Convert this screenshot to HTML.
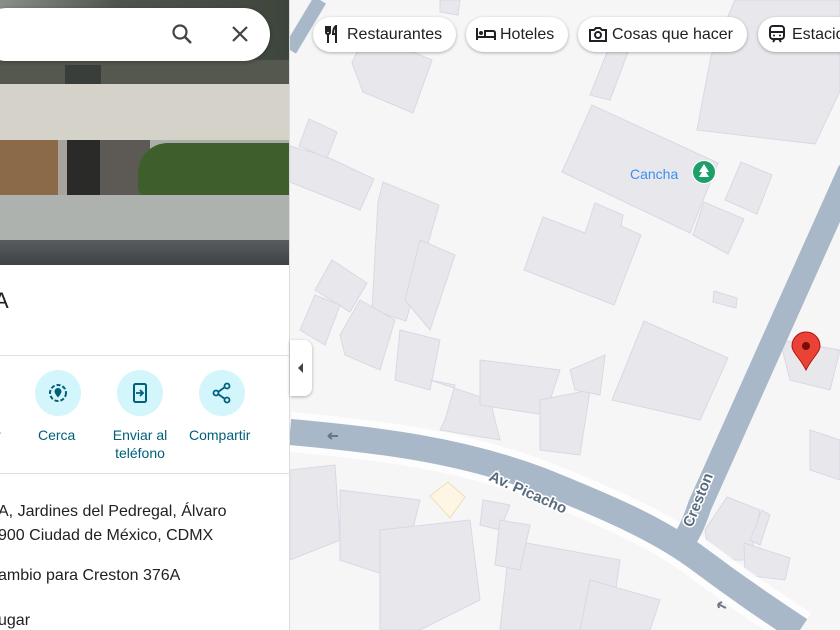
<!DOCTYPE html><html><head><style>
body{margin:0;width:840px;height:630px;overflow:hidden;position:relative;font-family:"Liberation Sans",sans-serif;background:#f6f6f6}
.panel{position:absolute;left:0;top:0;width:289px;height:630px;background:#fff;border-right:1px solid #ddd;z-index:2}
.photo{position:absolute;left:0;top:0;width:289px;height:265px;overflow:hidden;background:#a9aeab}
.photo div{position:absolute}
.search{position:absolute;left:-20px;top:8px;width:290px;height:53px;background:#fff;border-radius:27px;box-shadow:0 1px 4px rgba(0,0,0,.3);z-index:3}
.t{position:absolute;color:#202124;font-size:16px}
.btn{position:absolute;top:370px;width:46px;height:46px;border-radius:50%;background:#d3f5fc}
.lbl{position:absolute;top:426px;color:#00607a;font-size:14px;text-align:center;line-height:18px}
.chip{position:absolute;top:17px;height:35px;background:#fff;border-radius:18px;box-shadow:0 1px 3px rgba(0,0,0,.3);font-size:16px;color:#202124;line-height:35px;padding:0 14px 0 34px;z-index:3;white-space:nowrap}
.chip svg{position:absolute;left:10px;top:8px}
</style></head><body>
<svg style="position:absolute;left:0;top:0" width="840" height="630">
<path d="M320,0 L290,50" stroke="#a8b8c8" stroke-width="14"/>
<g fill="#e8e8ec" stroke="#d8d8e6">
<polygon points="352,63 366,32 432,60 413,113 363,92"/><polygon points="440,0 460,0 458,15 440,12"/>
<polygon points="562,172 592,105 718,163 690,233"/><polygon points="725,200 741,162 772,175 757,214"/>
<polygon points="693,235 704,202 744,219 728,254"/>
<polygon points="524,270 543,217 585,233 595,203 623,215 621,226 641,235 614,305"/>
<polygon points="697,130 711,56 735,0 840,0 840,91 815,144"/><polygon points="590,95 620,20 640,20 610,100"/>
<polygon points="714,291 737,298 736,308 713,302"/>
<polygon points="612,400 644,321 728,358 700,420"/>
<polygon points="290,146 325,156 374,179 360,210 290,182"/><polygon points="299,146 309,119 337,132 327,158"/>
<polygon points="378,202 383,182 439,205 406,321 372,310"/><polygon points="405,300 420,240 455,255 430,330"/>
<polygon points="315,290 332,260 367,283 350,312"/><polygon points="300,330 315,295 340,305 325,345"/>
<polygon points="340,335 360,300 395,320 380,370 345,355"/><polygon points="400,330 440,340 430,390 395,380"/>
<polygon points="430,380 455,385 445,420 440,430 500,440 490,400"/><polygon points="480,360 560,370 545,415 480,405"/>
<polygon points="540,400 590,390 580,455 540,450"/><polygon points="570,370 605,355 600,395 575,390"/>
<polygon points="780,340 840,350 830,390 790,380"/><polygon points="810,430 840,440 840,480 810,470"/>
<polygon points="705,530 727,497 760,510 750,560 710,560"/><polygon points="744,543 790,558 785,580 745,575"/><polygon points="762,510 770,515 760,545 750,540"/>
<polygon points="290,470 335,465 340,540 290,560"/><polygon points="340,490 420,500 400,580 340,560"/>
<polygon points="380,530 470,520 480,600 420,630 380,630"/><polygon points="483,500 510,505 500,530 480,525"/>
<polygon points="510,540 620,560 610,630 500,630"/><polygon points="590,580 660,600 650,630 580,630"/>
<polygon points="500,520 530,525 520,570 495,565"/>
</g>
<polygon points="430,496 448,482 465,497 450,518" fill="#fdf6e5" stroke="#f0dfb6"/>
<path d="M290,432 C380,440 460,450 540,480 C610,508 660,530 700,560 C740,590 770,610 800,630" stroke="#fff" stroke-width="40" fill="none" opacity=".8"/>
<path d="M290,432 C380,440 460,450 540,480 C610,508 660,530 700,560 C740,590 770,610 800,630" stroke="#a8b8c8" stroke-width="26" fill="none"/>
<path d="M850,170 L700,505 Q690,535 680,545" stroke="#a8b8c8" stroke-width="24" fill="none"/>
<path d="M328,436 h10 M328,436 l4,-3 M328,436 l4,3" stroke="#6b7785" stroke-width="2" fill="none"/>
<path d="M718,604 l8,4 M718,604 l4,-2 M718,604 l1,4" stroke="#6b7785" stroke-width="2" fill="none"/>
<text x="488" y="480" font-size="15" font-weight="bold" fill="#5b6b7d" stroke="#fff" stroke-width="3" paint-order="stroke" transform="rotate(24 488 480)" font-family="Liberation Sans">Av. Picacho</text>
<text x="692" y="528" font-size="15" font-weight="bold" fill="#5b6b7d" stroke="#fff" stroke-width="3" paint-order="stroke" transform="rotate(-68 692 528)" font-family="Liberation Sans">Creston</text>
<text x="630" y="179" font-size="14" fill="#3b8ef0" font-family="Liberation Sans">Cancha</text>
<circle cx="704" cy="172" r="12" fill="#fff"/><circle cx="704" cy="172" r="11" fill="#1e9e68"/><path d="M704,164 l-5,8 h3 l-3,5 h10 l-3,-5 h3z" fill="#fff"/>
<path d="M806,370 C800,358 792,352 792,346 a14,14 0 0 1 28,0 c0,6 -8,12 -14,24z" fill="#ea4335" stroke="#b31412"/><circle cx="806" cy="346" r="4" fill="#7a0c0c"/>
</svg>
<div style="position:absolute;left:290px;top:340px;width:22px;height:56px;background:#fff;border-radius:0 8px 8px 0;box-shadow:0 1px 3px rgba(0,0,0,.3);z-index:3"><div style="position:absolute;left:8px;top:23px;border-right:5px solid #444;border-top:5px solid transparent;border-bottom:5px solid transparent"></div></div>
<div class="chip" style="left:313px">Restaurantes<svg width="18" height="18"><path d="M3,1 v6 q0,2 2,2 v9 M7,1 v6 q0,2 -2,2 M5,1 v6 M13,18 V1 q-3,2 -3,8 h3" stroke="#202124" stroke-width="2" fill="none"/></svg></div>
<div class="chip" style="left:466px">Hoteles<svg width="20" height="18"><path d="M1,3 v12 M1,12 h18 v3 M19,12 v-4 q0,-2 -2,-2 h-8 v6" stroke="#202124" stroke-width="2" fill="none"/><circle cx="5" cy="8" r="2" fill="#202124"/></svg></div>
<div class="chip" style="left:578px">Cosas que hacer<svg width="20" height="18"><path d="M2,5 h4 l2,-2 h4 l2,2 h4 v11 h-16z" stroke="#202124" stroke-width="2" fill="none"/><circle cx="10" cy="10" r="3" stroke="#202124" stroke-width="2" fill="none"/></svg></div>
<div class="chip" style="left:758px">Estaciones<svg width="18" height="18"><rect x="2" y="1" width="14" height="13" rx="3" stroke="#202124" stroke-width="2" fill="none"/><path d="M3,7 h12 M5,17 l2,-3 M13,17 l-2,-3" stroke="#202124" stroke-width="2"/><circle cx="6" cy="10.5" r="1" fill="#202124"/><circle cx="12" cy="10.5" r="1" fill="#202124"/></svg></div>
<div class="panel"><div class="photo">
<div style="left:0;top:0;width:289px;height:88px;background:linear-gradient(90deg,#8a8f8a,#4f554e 40%,#3e463c)"></div>
<div style="left:0;top:60px;width:289px;height:28px;background:#55584f"></div>
<div style="left:65px;top:65px;width:36px;height:25px;background:#3a3e3a"></div>
<div style="left:0;top:84px;width:289px;height:56px;background:#d5d2ca"></div>
<div style="left:0;top:140px;width:58px;height:55px;background:#8a6a48"></div>
<div style="left:58px;top:140px;width:10px;height:55px;background:#a8a39c"></div>
<div style="left:67px;top:140px;width:33px;height:55px;background:#2a2a28"></div>
<div style="left:100px;top:140px;width:50px;height:58px;background:#5d5a55"></div>
<div style="left:138px;top:143px;width:151px;height:62px;background:#3e5e2c;border-radius:30px 0 0 20px"></div>
<div style="left:0;top:195px;width:289px;height:52px;background:#aeb2ae"></div>
<div style="left:0;top:240px;width:289px;height:25px;background:linear-gradient(#5a5d60,#3f4245)"></div>
</div>
<div class="t" style="left:-6px;top:288px;font-size:22px">A</div>
<div style="position:absolute;left:0;top:355px;width:289px;height:1px;background:#e0e0e0"></div>
<div class="btn" style="left:35px"><svg width="46" height="46"><circle cx="23" cy="23" r="8" fill="none" stroke="#00607a" stroke-width="2" stroke-dasharray="4 2"/><path d="M23,18 a3.5,3.5 0 0 1 3.5,3.5 c0,2 -3.5,6 -3.5,6 c0,0 -3.5,-4 -3.5,-6 a3.5,3.5 0 0 1 3.5,-3.5z" fill="#00607a"/></svg></div>
<div class="btn" style="left:117px"><svg width="46" height="46"><rect x="17" y="14" width="12" height="18" rx="1.5" fill="none" stroke="#00607a" stroke-width="2"/><path d="M19,23 h6 M23,20 l3,3 -3,3" stroke="#00607a" stroke-width="1.8" fill="none"/></svg></div>
<div class="btn" style="left:199px"><svg width="46" height="46"><circle cx="28" cy="16" r="2.5" fill="none" stroke="#00607a" stroke-width="1.8"/><circle cx="17" cy="23" r="2.5" fill="none" stroke="#00607a" stroke-width="1.8"/><circle cx="28" cy="30" r="2.5" fill="none" stroke="#00607a" stroke-width="1.8"/><path d="M19,22 L26,17 M19,24 L26,29" stroke="#00607a" stroke-width="1.8"/></svg></div>
<div class="lbl" style="left:-4px">r</div>
<div class="lbl" style="left:38px">Cerca</div>
<div class="lbl" style="left:108px;width:64px">Enviar al teléfono</div>
<div class="lbl" style="left:189px">Compartir</div>
<div style="position:absolute;left:0;top:473px;width:289px;height:1px;background:#e0e0e0"></div>
<div class="t" style="left:-2px;top:500px;line-height:24px">A, Jardines del Pedregal, Álvaro<br>900 Ciudad de México, CDMX</div>
<div class="t" style="left:-2px;top:567px">ambio para Creston 376A</div>
<div class="t" style="left:-2px;top:612px">ugar</div>
</div>
<div class="search"><svg style="position:absolute;left:190px;top:14px" width="24" height="24"><circle cx="10" cy="10" r="6.5" fill="none" stroke="#444" stroke-width="2.2"/><path d="M15,15 L21,21" stroke="#444" stroke-width="2.5"/></svg><svg style="position:absolute;left:250px;top:16px" width="20" height="20"><path d="M3,3 L17,17 M17,3 L3,17" stroke="#444" stroke-width="2.2"/></svg></div>
</body></html>
